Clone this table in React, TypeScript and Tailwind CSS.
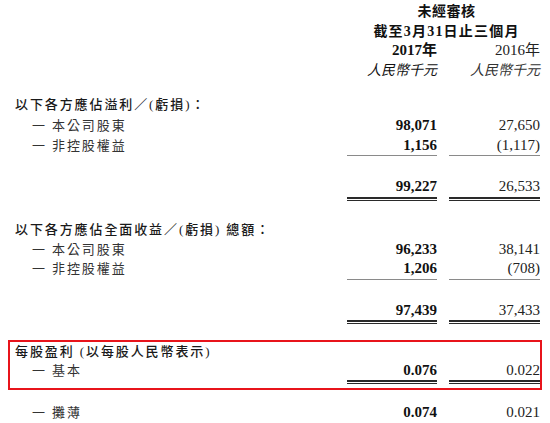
const font = "[font-family:'Liberation_Serif','Noto_Sans_CJK_TC',serif]";

function Blank() {
  return <div />;
}

function Single() {
  return (
    <>
      <Blank />
      <div className="h-px bg-[#8a8a8a]" />
      <div className="h-px bg-[#8a8a8a]" />
    </>
  );
}

function Double() {
  return (
    <>
      <Blank />
      <div className="box-border h-[4px] border-t-2 border-b border-[#2a2a2a]" />
      <div className="box-border h-[4px] border-t-2 border-b border-[#2a2a2a]" />
    </>
  );
}

function Title({ text, className = "" }: { text: string; className?: string }) {
  return (
    <>
      <div className={`col-span-3 text-[13px] tracking-[1.9px] font-medium text-[#1a1a1a] ${className}`}>{text}</div>
    </>
  );
}

function Item({ label, a, b }: { label: string; a: string; b: string }) {
  return (
    <>
      <div className="pl-[17px] text-[13px] tracking-[1.9px] text-[#333]">{label}</div>
      <div className="text-right text-[15px] font-bold text-[#111]">{a}</div>
      <div className="text-right text-[15px] text-[#222]">{b}</div>
    </>
  );
}

const grid = "grid grid-cols-[1fr_90px_91px] gap-x-[12px]";

export default function App() {
  return (
    <div className={`w-[550px] h-[423px] bg-white overflow-hidden ${font}`}>
      {/* header */}
      <div className={`${grid} pr-[10px] pt-[2px] leading-[19.5px] text-[#111]`}>
        <Blank />
        <div className="col-span-2 pl-[6px] text-center text-[14px] tracking-[0.5px] font-bold">未經審核</div>
        <Blank />
        <div className="col-span-2 pl-[6px] text-center text-[14px] tracking-[1.2px] font-bold">截至3月31日止三個月</div>
        <Blank />
        <div className="text-right text-[15px] font-bold">2017年</div>
        <div className="text-right text-[15px] text-[#222]">2016年</div>
        <Blank />
        <div className="text-right text-[14px] italic">人民幣千元</div>
        <div className="text-right text-[14px] italic text-[#333]">人民幣千元</div>
      </div>

      <div className={`${grid} pr-[10px] pl-[15px] mt-[15px] leading-[19.5px]`}>
        <Title text="以下各方應佔溢利／(虧損)：" className="mb-[1.5px]" />
        <Item label="一 本公司股東" a="98,071" b="27,650" />
        <Item label="一 非控股權益" a="1,156" b="(1,117)" />
        <Single />
        <div className="col-span-3 h-[21px]" />
        <Item label="" a="99,227" b="26,533" />
        <Double />
      </div>

      <div className={`${grid} pr-[10px] pl-[15px] mt-[19px] leading-[19.5px]`}>
        <Title text="以下各方應佔全面收益／(虧損) 總額：" className="mb-[0.5px]" />
        <Item label="一 本公司股東" a="96,233" b="38,141" />
        <Item label="一 非控股權益" a="1,206" b="(708)" />
        <Single />
        <div className="col-span-3 h-[21px]" />
        <Item label="" a="97,439" b="37,433" />
        <Double />
      </div>

      <div className="mx-[8px] mt-[16px] border-2 border-[#e8141b]">
        <div className={`${grid} pl-[5px] pb-[4px] leading-[19px]`}>
          <Title text="每股盈利 (以每股人民幣表示)" />
          <Item label="一 基本" a="0.076" b="0.022" />
          <Double />
        </div>
      </div>

      <div className={`${grid} pr-[10px] pl-[15px] mt-[13px] leading-[19.5px]`}>
        <Item label="一 攤薄" a="0.074" b="0.021" />
      </div>
    </div>
  );
}
